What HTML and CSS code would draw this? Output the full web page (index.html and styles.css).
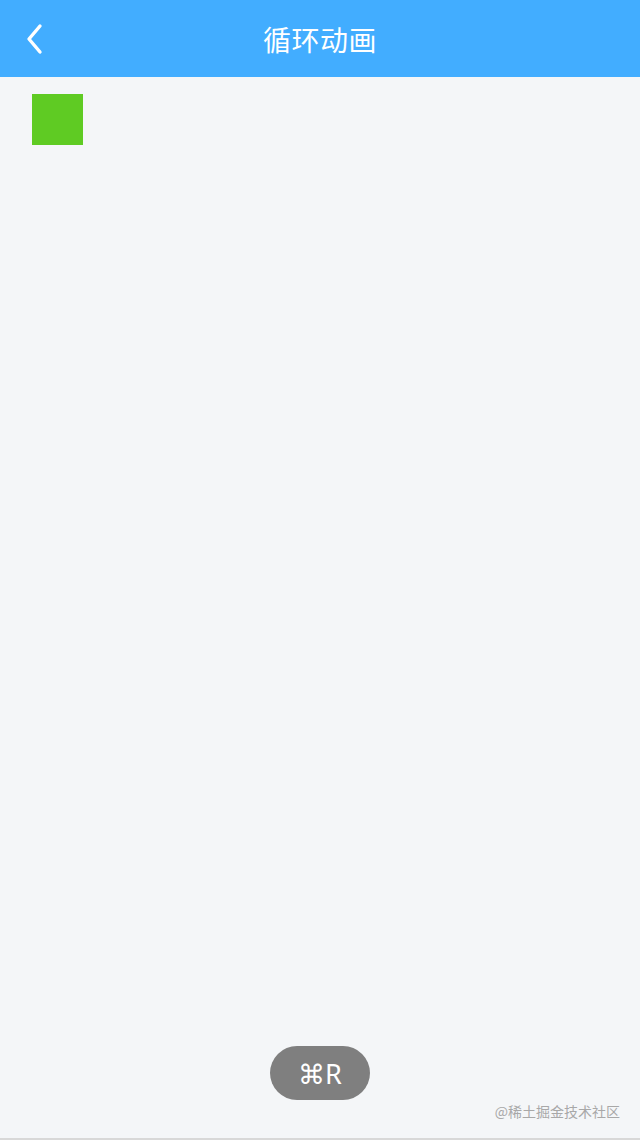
FILE: index.html
```html
<!DOCTYPE html>
<html>
<head>
<meta charset="utf-8">
<link rel="stylesheet" href="styles.css">
</head>
<body>
<div class="page">
  <header class="nav">
    <svg class="back" width="20" height="32" viewBox="0 0 20 32"><path d="M16 3 L5 16 L16 29" fill="none" stroke="#fff" stroke-width="3.4" stroke-linecap="round" stroke-linejoin="round"/></svg>
    <div class="title">循环动画</div>
  </header>
  <main class="content">
    <div class="box"></div>
  </main>
  <footer class="foot">
    <div class="pill">⌘R</div>
    <div class="mark">@稀土掘金技术社区</div>
  </footer>
</div>
</body>
</html>
```
FILE: styles.css
```css
html, body { margin: 0; padding: 0; }
body { background: #f4f6f8; font-family: "Noto Sans CJK SC", "Noto Sans", sans-serif; }
.page { width: 640px; height: 1140px; display: flex; flex-direction: column; border-bottom: 2px solid #d8d8d8; box-sizing: border-box; }
.nav { height: 77px; background: #42adff; position: relative; display: flex; align-items: center; justify-content: center; flex-shrink: 0; }
.back { position: absolute; left: 24px; top: 23px; }
.title { color: #fff; font-size: 28px; font-weight: 400; letter-spacing: 0.5px; }
.content { flex: 1; padding: 17px 32px; }
.box { width: 51px; height: 51px; background: #5fcb23; }
.foot { position: relative; height: 106px; flex-shrink: 0; }
.pill { position: absolute; left: 270px; top: 14px; width: 100px; height: 54px; border-radius: 27px; background: #7f7f7f; color: #fff; font-family: "Noto Sans", sans-serif; font-size: 27px; display: flex; align-items: center; justify-content: center; }
.mark { position: absolute; right: 20px; top: 69px; color: #a8a8a8; font-size: 14px; }
```
